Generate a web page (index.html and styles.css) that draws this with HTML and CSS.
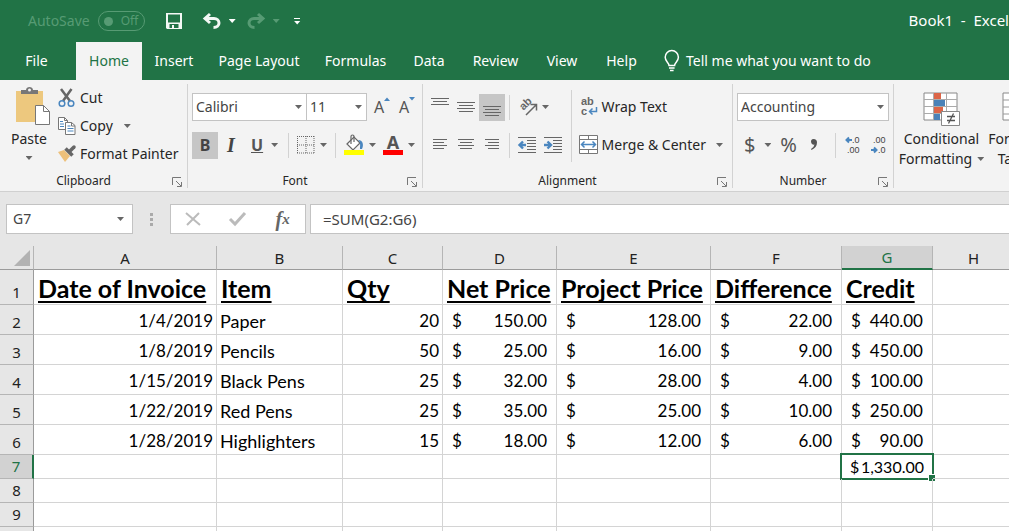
FILE: index.html
```html
<!DOCTYPE html>
<html lang="en">
<head>
<meta charset="utf-8">
<title>Book1 - Excel</title>
<link rel="stylesheet" href="styles.css">
</head>
<body>
<header class="title-bar">
  <div class="autosave"><span id="autosave-label">AutoSave</span>
    <button class="toggle" type="button" aria-labelledby="autosave-label"><span class="knob"></span>Off</button>
  </div>
  <div class="quick">
    <button type="button" class="quick-save" aria-label="Save"><svg width="16" height="16" viewBox="0 0 16 16"><path d="M0 0h16v16H1l-1-1zM2 1.5v8h12v-8zM3.500 11v4H6v-3h2v3h4.500v-4z" fill="#f3f8f5" fill-rule="evenodd"/></svg></button>
    <button type="button" class="quick-undo" aria-label="Undo"><svg width="18" height="16" viewBox="0 0 18 16"><path d="M7 1L2 5.500 7 10M2.500 5.500H11c3 0 5 2 5 4.500S14 14.500 10.500 14.500" fill="none" stroke="#f3f8f5" stroke-width="3"/></svg><span class="caret light"></span></button>
    <button type="button" class="quick-redo" aria-label="Redo"><svg width="18" height="16" viewBox="0 0 18 16"><path d="M11 1l5 4.500L11 10M15.500 5.500H7c-3 0-5 2-5 4.500s2 4.500 5.500 4.500" fill="none" stroke="#579b74" stroke-width="3"/></svg><span class="caret faded"></span></button>
    <button type="button" class="quick-more" aria-label="Customize"><span class="bar"></span><span class="caret light"></span></button>
  </div>
  <h1 class="doc-name">Book1&nbsp; -&nbsp; Excel</h1>
</header>
<nav class="tabs">
  <button type="button" class="file">File</button>
  <button type="button" class="active">Home</button>
  <button type="button">Insert</button>
  <button type="button">Page Layout</button>
  <button type="button">Formulas</button>
  <button type="button">Data</button>
  <button type="button">Review</button>
  <button type="button">View</button>
  <button type="button">Help</button>
  <button type="button" class="tell"><svg width="16" height="22" viewBox="0 0 16 22"><path d="M5 15.500c0-3-3.800-4-3.800-8.300a6.600 6.600 0 0 1 13.200 0c0 4.300-3.800 5.300-3.800 8.300zM5 18h5.600M6 20.500h3.600" fill="none" stroke="#fff" stroke-width="1.500"/></svg>Tell me what you want to do</button>
</nav>
<main>
<section class="ribbon" aria-label="Home ribbon">
  <div class="group clipboard">
    <div class="group-body">
      <button type="button" class="big paste">
        <svg width="36" height="38" viewBox="0 0 36 38"><path d="M1 4h27v31H1z" fill="#edc87e"/><path d="M6 7V3h5c0-4 7-4 7 0h5v4z" fill="#777"/><circle cx="14.500" cy="3" r="1.500" fill="#f3f3f3"/><path d="M20.500 18.500h8l6 6v13h-14z" fill="#fff" stroke="#777"/><path d="M28.500 18.500v6h6" fill="none" stroke="#777"/></svg>
        <span>Paste</span><span class="caret"></span>
      </button>
      <div class="clip-list">
        <button type="button"><svg width="18" height="18" viewBox="0 0 18 18"><path d="M3 0l9 12M13.500 0L5 12" stroke="#666" stroke-width="2.500"/><circle cx="4" cy="14.500" r="2.800" fill="#f3f3f3" stroke="#4a86bf" stroke-width="1.500"/><circle cx="13" cy="14.500" r="2.800" fill="#f3f3f3" stroke="#4a86bf" stroke-width="1.500"/></svg>Cut</button>
        <button type="button"><svg width="18" height="18" viewBox="0 0 18 18"><path d="M.5.500h6l3 3v9h-9z" fill="#fff" stroke="#777"/><path d="M7.500 5.500h6l3.500 3v9H7.500z" fill="#fff" stroke="#777"/><path d="M13.500 5.500v3.500H17M6.500.500v3h3" fill="none" stroke="#777"/><path d="M2 4.500h3M2 7h4M2 9.500h4M9.500 9h3M9.500 11.500h6M9.500 14h6" stroke="#4a86bf"/></svg>Copy<span class="caret"></span></button>
        <button type="button"><svg width="18" height="18" viewBox="0 0 18 18"><path d="M0 7l6-2 6 6-5 6z" fill="#edc07a"/><path d="M7.500 3.500l7 7" stroke="#666" stroke-width="3.500"/><path d="M11.500 6.500L16 2" stroke="#666" stroke-width="3.500" stroke-linecap="round"/></svg>Format Painter</button>
      </div>
    </div>
    <div class="group-title">Clipboard</div>
    <svg class="launcher" width="10" height="10" viewBox="0 0 10 10"><path d="M.5 8V.500H9M4 4l5 5M9.500 5v4.500H5" fill="none" stroke="#777"/></svg>
  </div>

  <div class="group font">
    <div class="group-body rows">
      <div class="row">
        <label class="combo family"><select aria-label="Font"><option>Calibri</option></select><span class="caret"></span></label>
        <label class="combo size"><select aria-label="Font size"><option>11</option></select><span class="caret"></span></label>
        <button type="button" class="grow-btn" aria-label="Increase font size">A<svg width="6" height="4"><path d="M0 4l3-3.500L6 4z" fill="#4a86bf"/></svg></button>
        <button type="button" class="grow-btn" aria-label="Decrease font size">A<svg width="6" height="4"><path d="M0 0l3 3.500L6 0z" fill="#4a86bf"/></svg></button>
      </div>
      <div class="row">
        <button type="button" class="sq on bold">B</button>
        <button type="button" class="sq italic">I</button>
        <button type="button" class="drop under"><u>U</u><span class="caret"></span></button>
        <span class="rule"></span>
        <button type="button" class="drop" aria-label="Borders"><svg width="18" height="18" viewBox="0 0 18 18"><path d="M.500 0v18M17 0v18M9 0v18M0 .500h18M0 9h18M0 17h18" stroke="#666" stroke-dasharray="1 1"/></svg><span class="caret"></span></button>
        <span class="rule"></span>
        <button type="button" class="drop" aria-label="Fill colour"><svg width="20" height="20" viewBox="0 0 20 20"><path d="M3 9l7-7 6 6-7 7z" fill="#fff" stroke="#666" stroke-width="1.200"/><path d="M7 9V1.500Q7 0 8.500 0T10 1.500V7" fill="none" stroke="#666" stroke-width="1.200"/><path d="M14 5c5 0 6 5 4 9h-2c0-4 1-6-2-9z" fill="#4a86bf"/><path d="M0 15h20v5H0z" fill="#ff0"/></svg><span class="caret"></span></button>
        <button type="button" class="drop letter" aria-label="Font colour"><span class="swatch">A</span><span class="caret"></span></button>
      </div>
    </div>
    <div class="group-title">Font</div>
    <svg class="launcher" width="10" height="10" viewBox="0 0 10 10"><path d="M.5 8V.500H9M4 4l5 5M9.500 5v4.500H5" fill="none" stroke="#777"/></svg>
  </div>

  <div class="group align">
    <div class="group-body">
      <div class="rows">
        <div class="row">
          <button type="button" class="sq" aria-label="Top align"><svg width="18" height="20"><path d="M0 1.500h18M2 4.500h14M0 7.500h18" stroke="#666"/></svg></button>
          <button type="button" class="sq" aria-label="Middle align"><svg width="18" height="20"><path d="M0 5.500h18M2 8.500h14M0 11.500h18M2 14.500h14" stroke="#666"/></svg></button>
          <button type="button" class="sq on" aria-label="Bottom align"><svg width="18" height="20"><path d="M0 9.500h18M2 12.500h14M0 15.500h18M2 18.500h14" stroke="#666"/></svg></button>
          <span class="rule"></span>
          <button type="button" class="drop" aria-label="Orientation"><svg width="20" height="20" viewBox="0 0 20 20"><text class="ab" x="3" y="14" transform="rotate(-45 4 11)">ab</text><path d="M8 18L18 8M12.500 7.500H18.500V13.500" fill="none" stroke="#666" stroke-width="1.500"/></svg><span class="caret"></span></button>
        </div>
        <div class="row">
          <button type="button" class="sq" aria-label="Align left"><svg width="14" height="14"><path d="M0 1.500h14M0 4.500h11M0 7.500h14M0 10.500h11" stroke="#666"/></svg></button>
          <button type="button" class="sq" aria-label="Center"><svg width="16" height="14"><path d="M0 1.500h16M2 4.500h12M0 7.500h16M2 10.500h12" stroke="#666"/></svg></button>
          <button type="button" class="sq" aria-label="Align right"><svg width="14" height="14"><path d="M0 1.500h14M3 4.500h11M0 7.500h14M3 10.500h11" stroke="#666"/></svg></button>
          <span class="rule"></span>
          <button type="button" class="sq" aria-label="Decrease indent"><svg width="18" height="18"><path d="M0 1.500h18M9 4.500h9M9 7.500h9M9 10.500h9M9 13.500h9M0 16.500h18" stroke="#666"/><path d="M8 9H2M5 5.500L1.500 9 5 12.500" fill="none" stroke="#4a86bf" stroke-width="2.400"/></svg></button>
          <button type="button" class="sq" aria-label="Increase indent"><svg width="18" height="18"><path d="M0 1.500h18M9 4.500h9M9 7.500h9M9 10.500h9M9 13.500h9M0 16.500h18" stroke="#666"/><path d="M0 9h6M3.500 5.500L7 9l-3.500 3.500" fill="none" stroke="#4a86bf" stroke-width="2.400"/></svg></button>
        </div>
      </div>
      <div class="rows wrap-list">
        <button type="button"><svg width="20" height="20" viewBox="0 0 20 20"><text class="wrap-ab" x="2" y="8">ab</text><text class="wrap-ab" x="2" y="18">c</text><path d="M17.500 10v4.500H11M13.500 11.500l-3 3 3 3" fill="none" stroke="#4a86bf" stroke-width="1.500"/></svg>Wrap Text</button>
        <button type="button"><svg width="20" height="20" viewBox="0 0 20 20"><path d="M.500.500h18v18H.500zM.500 4.500h18M.500 14.500h18M9.500 0v5M9.500 14v4.500" fill="#fff" stroke="#777"/><path d="M3 9.500h13M5.500 6.500l-3 3 3 3M13.500 6.500l3 3-3 3" fill="none" stroke="#4a86bf" stroke-width="1.500"/></svg>Merge &amp; Center<span class="caret"></span></button>
      </div>
    </div>
    <div class="group-title">Alignment</div>
    <svg class="launcher" width="10" height="10" viewBox="0 0 10 10"><path d="M.5 8V.500H9M4 4l5 5M9.500 5v4.500H5" fill="none" stroke="#777"/></svg>
  </div>

  <div class="group number">
    <div class="group-body rows">
      <div class="row"><label class="combo format"><select aria-label="Number format"><option>Accounting</option></select><span class="caret"></span></label></div>
      <div class="row">
        <button type="button" class="drop symbol">$<span class="caret"></span></button>
        <button type="button" class="sq symbol">%</button>
        <button type="button" class="sq comma" aria-label="Comma style"><svg width="8" height="14" viewBox="0 0 8 14"><path d="M3.500 1a2.800 2.800 0 1 0 1 5.500q-.500 3-3.500 4.500l.500 1Q7 9.500 7 4.500 7 1 3.500 1z" fill="#555"/></svg></button>
        <span class="rule"></span>
        <button type="button" class="sq" aria-label="Increase decimal"><svg width="18" height="20"><text class="dec" x="8" y="8">.0</text><text class="dec" x="3" y="18">.00</text><path d="M8 5H3M5 2.500L2.500 5 5 7.500" fill="none" stroke="#4a86bf" stroke-width="2"/></svg></button>
        <button type="button" class="sq" aria-label="Decrease decimal"><svg width="18" height="20"><text class="dec" x="3" y="8">.00</text><text class="dec" x="8" y="18">.0</text><path d="M1 15h5M4 12.500L6.500 15 4 17.500" fill="none" stroke="#4a86bf" stroke-width="2"/></svg></button>
      </div>
    </div>
    <div class="group-title">Number</div>
    <svg class="launcher" width="10" height="10" viewBox="0 0 10 10"><path d="M.5 8V.500H9M4 4l5 5M9.500 5v4.500H5" fill="none" stroke="#777"/></svg>
  </div>

  <div class="group styles">
    <div class="group-body">
      <button type="button" class="big"><svg width="38" height="36" viewBox="0 0 38 36"><path d="M1 1h33v27H1z" fill="#fff" stroke="#888"/><path d="M11 1h7v6h-7zM11 15h9v6h-9z" fill="#dc6547"/><path d="M11 8h11v6H11zM11 22h6v6h-6z" fill="#4a82b8"/><path d="M1 7.500h33M1 14.500h33M1 21.500h33M10.500 1v27M23.500 1v27" stroke="#aaa"/><path d="M18.500 19.500h18v14h-18z" fill="#fff" stroke="#888"/><path d="M24 24.500h8M24 28.500h8M30.500 21.500l-5 10" stroke="#555" stroke-width="1.300"/></svg>
        <span>Conditional</span><span class="line">Formatting<span class="caret"></span></span></button>
      <button type="button" class="big table-btn"><svg width="38" height="36" viewBox="0 0 38 36"><path d="M1 1h34v27H1z" fill="#fff" stroke="#888"/><path d="M1 8h34M1 15h34M1 22h34M12 1v27M24 1v27" stroke="#999"/></svg>
        <span>Format as</span><span class="line">Table<span class="caret"></span></span></button>
    </div>
  </div>
</section>

<section class="formula-row" aria-label="Formula bar">
  <div class="name-box"><input aria-label="Name box" value="G7"><span class="caret"></span></div>
  <span class="dots"><i></i><i></i><i></i></span>
  <div class="fx-buttons">
    <button type="button" aria-label="Cancel"><svg width="16" height="14"><path d="M1 1l14 12M14 1L2 13" stroke="#bbb" stroke-width="2"/></svg></button>
    <button type="button" aria-label="Enter"><svg width="18" height="14"><path d="M1 7l5 5L16 1" fill="none" stroke="#bbb" stroke-width="3"/></svg></button>
    <button type="button" class="fx" aria-label="Insert function">f<small>x</small></button>
  </div>
  <input class="formula" aria-label="Formula" value="=SUM(G2:G6)">
</section>

<table class="sheet">
  <colgroup><col class="c-n"><col class="c-a"><col class="c-b"><col class="c-c"><col class="c-d"><col class="c-e"><col class="c-f"><col class="c-g"><col></colgroup>
  <thead><tr><th class="corner"><svg width="16" height="16"><path d="M16 0v16H0z" fill="#b2b2b2"/></svg></th><th>A</th><th>B</th><th>C</th><th>D</th><th>E</th><th>F</th><th class="sel">G</th><th class="last">H</th></tr></thead>
  <tbody>
  <tr class="heads"><th>1</th><td>Date of Invoice</td><td>Item</td><td>Qty</td><td>Net Price</td><td>Project Price</td><td>Difference</td><td>Credit</td><td></td></tr>
  <tr class="data"><th>2</th><td class="num">1/4/2019</td><td class="name">Paper</td><td class="num">20</td><td><div class="money"><span>$</span><span>150.00</span></div></td><td><div class="money"><span>$</span><span>128.00</span></div></td><td><div class="money"><span>$</span><span>22.00</span></div></td><td><div class="money"><span>$</span><span>440.00</span></div></td><td></td></tr>
  <tr class="data"><th>3</th><td class="num">1/8/2019</td><td class="name">Pencils</td><td class="num">50</td><td><div class="money"><span>$</span><span>25.00</span></div></td><td><div class="money"><span>$</span><span>16.00</span></div></td><td><div class="money"><span>$</span><span>9.00</span></div></td><td><div class="money"><span>$</span><span>450.00</span></div></td><td></td></tr>
  <tr class="data"><th>4</th><td class="num">1/15/2019</td><td class="name">Black Pens</td><td class="num">25</td><td><div class="money"><span>$</span><span>32.00</span></div></td><td><div class="money"><span>$</span><span>28.00</span></div></td><td><div class="money"><span>$</span><span>4.00</span></div></td><td><div class="money"><span>$</span><span>100.00</span></div></td><td></td></tr>
  <tr class="data"><th>5</th><td class="num">1/22/2019</td><td class="name">Red Pens</td><td class="num">25</td><td><div class="money"><span>$</span><span>35.00</span></div></td><td><div class="money"><span>$</span><span>25.00</span></div></td><td><div class="money"><span>$</span><span>10.00</span></div></td><td><div class="money"><span>$</span><span>250.00</span></div></td><td></td></tr>
  <tr class="data"><th>6</th><td class="num">1/28/2019</td><td class="name">Highlighters</td><td class="num">15</td><td><div class="money"><span>$</span><span>18.00</span></div></td><td><div class="money"><span>$</span><span>12.00</span></div></td><td><div class="money"><span>$</span><span>6.00</span></div></td><td><div class="money"><span>$</span><span>90.00</span></div></td><td></td></tr>
  <tr><th class="sel">7</th><td></td><td></td><td></td><td></td><td></td><td></td><td class="current"><div class="money"><span>$</span><span>1,330.00</span></div></td><td></td></tr>
  <tr><th>8</th><td></td><td></td><td></td><td></td><td></td><td></td><td></td><td></td></tr>
  <tr><th>9</th><td></td><td></td><td></td><td></td><td></td><td></td><td></td><td></td></tr>
  <tr><th></th><td></td><td></td><td></td><td></td><td></td><td></td><td></td><td></td></tr>
  </tbody>
</table>
</main>
</body>
</html>
```
FILE: styles.css
```css
* { box-sizing: border-box; }
body {
  margin: 0;
  height: 100vh;
  overflow: hidden;
  background: #fff;
  color: #262626;
  font: 14px/20px "Noto Sans", "Open Sans", sans-serif;
}
button, input, select { font: inherit; color: inherit; margin: 0; padding: 0; border: 0; background: none; }
button { display: flex; flex: none; align-items: center; white-space: nowrap; }
svg { display: block; flex: none; overflow: visible; }
.caret { flex: none; width: 7px; height: 4px; background: #666; clip-path: polygon(0 0, 100% 0, 50% 100%); }
.caret.light { background: #fff; }
.caret.faded { background: #579b74; }

/* Title bar and tabs */
.title-bar { display: flex; align-items: center; height: 42px; padding-left: 28px; background: #217346; color: #fff; }
.autosave { display: flex; align-items: center; gap: 8px; color: #579b74; }
.toggle { width: 47px; height: 20px; padding-left: 5px; gap: 8px; border: 1px solid #579b74; border-radius: 10px; font-size: 12px; line-height: 16px; }
.knob { width: 9px; height: 9px; border-radius: 50%; background: #579b74; }
.quick { display: flex; align-items: center; margin-left: 21px; }
.quick button { gap: 8px; }
.quick-save { width: 37px; }
.quick-undo, .quick-redo { width: 44px; }
.quick .quick-more { flex-direction: column; gap: 2px; margin-left: 3px; }
.bar { width: 6px; height: 1px; background: #fff; }
.doc-name { margin: 0 0 3px auto; font-size: 15px; font-weight: 400; white-space: nowrap; }
.tabs {
  display: grid;
  grid-template-columns: 76px 66px 64px 106px 87px 60px 73px 60px 59px 1fr;
  height: 38px;
  background: #217346;
  color: #fff;
}
.tabs button { justify-content: center; }
.tabs .file { padding-right: 3px; }
.tabs .active { background: #f3f3f3; color: #217346; }
.tabs .tell { justify-content: flex-start; padding-left: 13px; gap: 6px; }

/* Ribbon */
.ribbon { display: flex; height: 112px; overflow: hidden; padding-top: 4px; background: #f3f3f3; border-bottom: 1px solid #d0d0d0; }
.group { position: relative; flex: none; display: flex; flex-direction: column; height: 104px; border-right: 1px solid #d2d2d2; }
.group-body { display: flex; height: 88px; }
.group-title { padding: 0 20px 0 0; text-align: center; font-size: 12px; line-height: 20px; }
.launcher { position: absolute; right: 5px; bottom: 1px; }
.clipboard { width: 188px; }
.font { width: 235px; }
.align { width: 310px; }
.number { width: 161px; }
.big { flex-direction: column; }
.paste { width: 50px; padding: 3px 0 0 8px; }
.paste .caret { margin-top: 7px; }
.paste svg { margin: 0 0 4px 8px; }
.clip-list { display: flex; flex-direction: column; padding-left: 8px; }
.clip-list button { height: 28px; gap: 4px; }
.clip-list .caret { margin-left: 7px; }
.rows { display: flex; flex-direction: column; gap: 10px; padding-top: 9px; }
.group-body { flex: none; margin-bottom: 0; }
.group-title { margin-top: -1px; padding-top: 4px; line-height: 12px; height: 20px; }
.row { display: flex; align-items: center; height: 28px; }
.font .group-body, .number .group-body, .align .rows { padding-left: 4px; }
.combo { display: grid; flex: none; align-items: center; height: 28px; border: 1px solid #c3c3c3; background: #fff; color: #444; }
.combo select { grid-area: 1 / 1; appearance: none; width: 100%; padding-left: 3px; }
.combo .caret { grid-area: 1 / 1; justify-self: end; margin-right: 4px; pointer-events: none; }
.family { width: 115px; }
.size { width: 60px; border-left: 0; }
.format { width: 152px; }
.grow-btn { align-items: flex-start; width: 18px; margin-left: 7px; color: #555; font-size: 16px; }
.sq { justify-content: center; width: 26px; height: 27px; color: #444; }
.on { background: #c6c6c6; }
.bold { font-weight: 700; font-size: 16px; }
.italic { font: italic 700 20px "Liberation Serif", serif; }
.drop { height: 27px; gap: 4px; padding: 0 4px; }
.font .drop { gap: 5px; padding: 0; }
.font .under { width: 36px; padding-left: 7px; gap: 8px; font-size: 16px; font-weight: 700; color: #555; }
.rule { flex: none; width: 1px; height: 25px; margin: 0 4px; background: #d2d2d2; }
.font .rule { margin: 0 8px; }
.letter { margin-left: 7px; }
.swatch { width: 20px; height: 20px; border-bottom: 5px solid #f00; font: 700 18px/14px "Noto Sans", sans-serif; color: #555; }
.ab { font: 700 11px "Liberation Sans", sans-serif; fill: #666; }
.align .wrap-list {
  margin-left: auto;
  padding-left: 10px;
  padding-right: 9px;
  background: linear-gradient(#d2d2d2, #d2d2d2) 2px 6px / 1px 72px no-repeat;
}
.wrap-list button { height: 28px; gap: 3px; }
.wrap-list .caret { margin-left: 7px; }
.wrap-ab { font: 700 11px "Liberation Sans", sans-serif; fill: #666; }
.symbol { font-size: 20px; color: #555; }
.number .drop { padding-left: 7px; gap: 9px; }
.comma { margin-right: 4px; }
.dec { font: 9px "Liberation Sans", sans-serif; fill: #444; }
.styles { border-right: 0; }
.styles .big { width: 95px; padding-top: 8px; }
.styles .big svg { margin-bottom: 1px; }
.styles .table-btn { width: 64px; }
.line { display: flex; align-items: center; gap: 5px; }

/* Formula bar */
.formula-row { display: flex; align-items: center; height: 54px; padding-left: 6px; background: #e6e6e6; color: #444; }
.name-box { display: flex; align-items: center; width: 127px; height: 30px; padding: 0 8px 0 6px; background: #fff; border: 1px solid #c3c3c3; }
.name-box input { flex: 1; min-width: 0; }
.dots { display: grid; gap: 2px; margin: 0 17px; }
.dots i { width: 3px; height: 3px; background: #aaa; }
.fx-buttons { display: grid; grid-template-columns: repeat(3, 1fr); width: 136px; height: 30px; background: #fff; border: 1px solid #c3c3c3; }
.fx-buttons button { justify-content: center; }
.fx-buttons .fx { font: italic 700 20px "Liberation Serif", serif; color: #666; }
.fx small { font-size: 15px; }
.formula { flex: 1; min-width: 0; height: 30px; margin-left: 4px; padding-left: 12px; background: #fff; border: 1px solid #c3c3c3; border-right: 0; font-size: 15px; }

/* Worksheet */
.sheet { width: 100%; table-layout: fixed; border-collapse: separate; border-spacing: 0; color: #000; }
.c-n { width: 34px; }
.c-a { width: 183px; }
.c-b { width: 126px; }
.c-c { width: 100px; }
.c-d { width: 114px; }
.c-e { width: 154px; }
.c-f { width: 131px; }
.c-g { width: 91px; }
.sheet th { height: 24px; padding: 0; background: #e6e6e6; border-right: 1px solid #b5b5b5; border-bottom: 1px solid #9b9b9b; font-weight: 400; font-size: 15px; line-height: 20px; color: #222; }
.sheet tbody th { padding-bottom: 2px; border-right-color: #9b9b9b; border-bottom-color: #b5b5b5; vertical-align: bottom; }
.sheet td { position: relative; height: 24px; padding: 0 3px; border-right: 1px solid #d4d4d4; border-bottom: 1px solid #d4d4d4; font: 17px/20px Lato, sans-serif; white-space: nowrap; }
.sheet tr > :last-child { border-right: 0; }
.sheet .last { padding-left: 5px; }
.sheet .corner svg { margin-left: auto; margin-right: 3px; }
.sheet .sel { background: #d2d2d2; color: #217346; }
.sheet thead .sel { border-bottom: 2px solid #217346; }
.sheet tbody .sel { border-right: 2px solid #217346; }
.sheet .heads td { height: 35px; padding: 2px 4px 0; font-size: 25px; line-height: 28px; font-weight: 700; text-decoration: underline; text-decoration-thickness: 2px; text-underline-offset: 3px; text-decoration-skip-ink: none; }
.sheet .data td { height: 30px; padding-top: 3px; }
.sheet .data .name { font-size: 18px; }
.num { text-align: right; }
.money { display: flex; justify-content: space-between; padding: 0 6px; }
.sheet .current { font-size: 16px; }
.current .money { padding: 0 5px; }
.current::before { content: ""; position: absolute; inset: -2px; border: 2px solid #217346; }
.current::after { content: ""; position: absolute; right: -3px; bottom: -3px; width: 6px; height: 6px; background: #217346; border: 1px solid #fff; border-width: 1px 0 0 1px; }
```
